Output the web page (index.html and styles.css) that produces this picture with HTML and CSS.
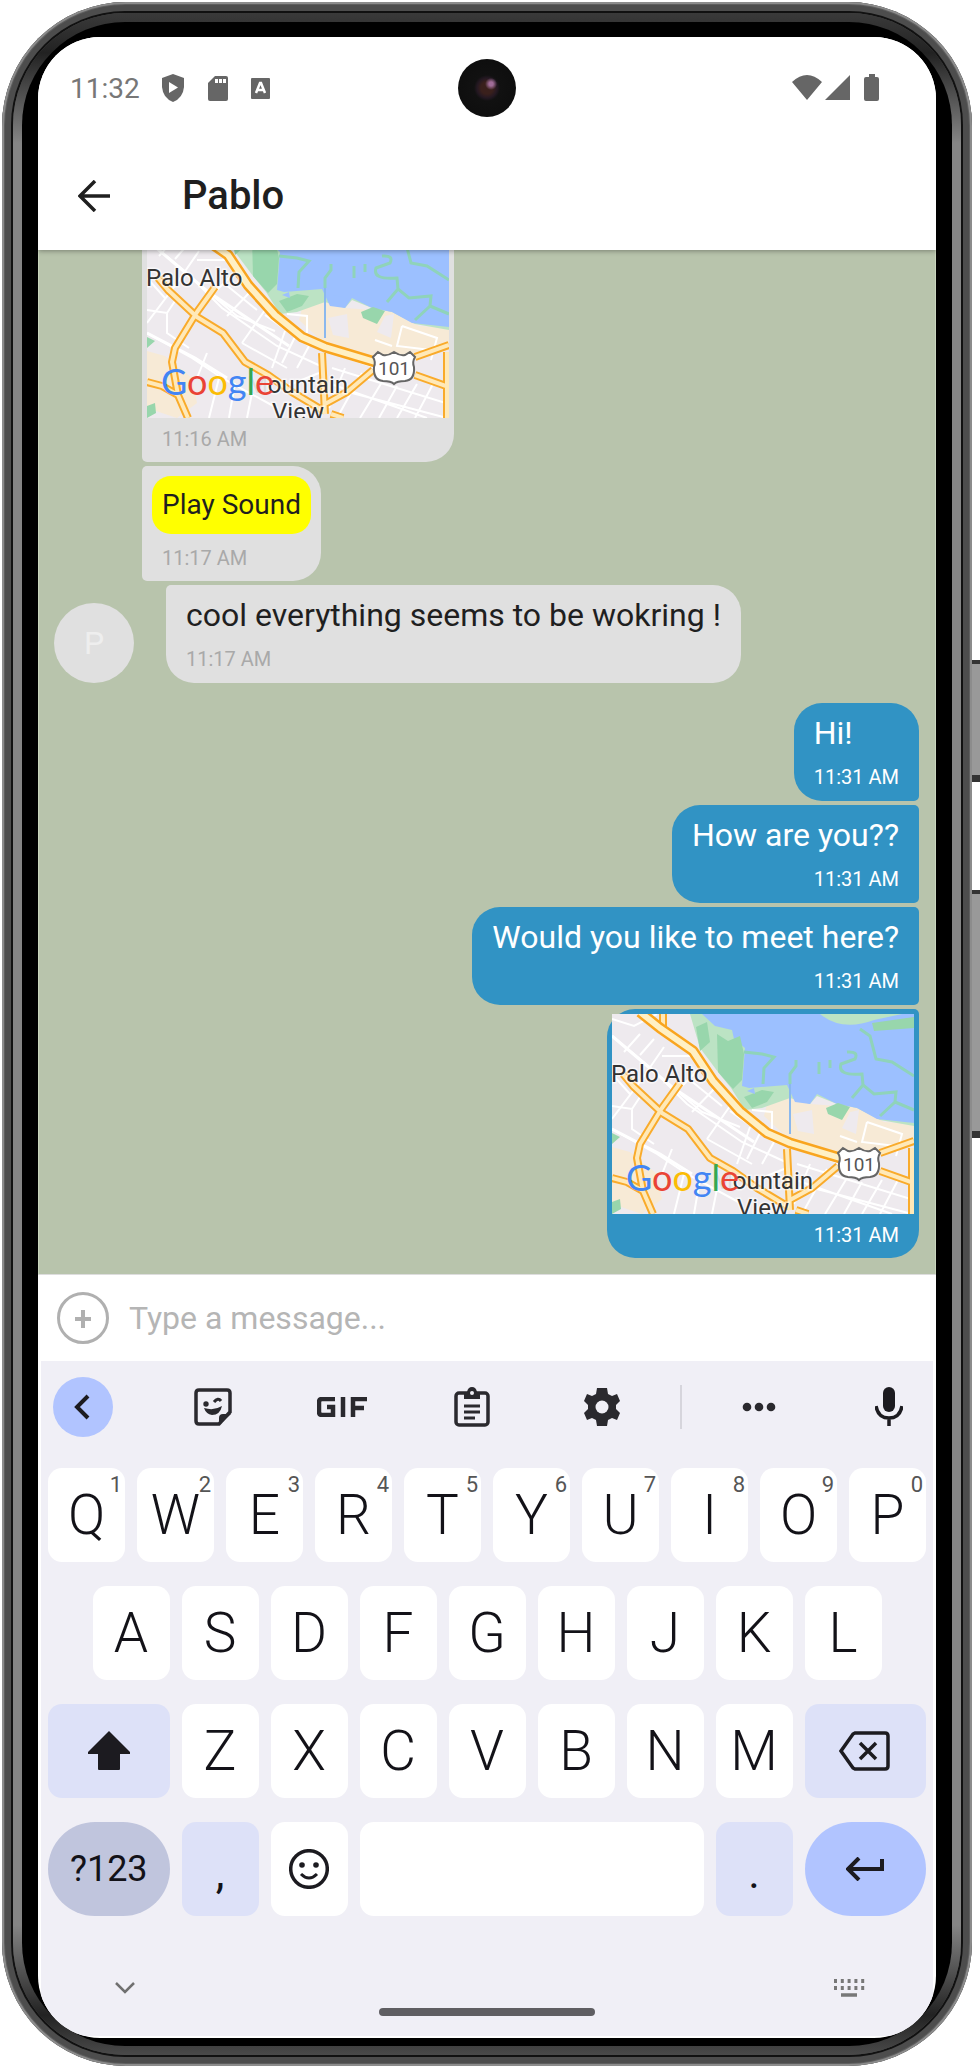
FILE: index.html
```html
<!DOCTYPE html>
<html lang="en">
<head>
<meta charset="utf-8">
<title>Pablo</title>
<link rel="stylesheet" href="styles.css">
</head>
<body>
<svg class="defs" aria-hidden="true">
  <symbol id="map" viewBox="0 0 302 200">
    <rect width="302" height="200" fill="#eeeaee"/>
    <path d="M0 133L18 138 45 160 50 185 30 200 0 190z M155 90L175 82 198 90 225 92 250 94 272 108 302 110V132L262 142 228 144 178 126 152 102z" fill="#f7ead6"/>
    <path d="M78 0H302V112L268 106 245 94 225 90 205 82 198 90 178 84 150 94 133 96 119 74 106 58 88 34z" fill="#bce3c4"/>
    <path d="M90 0L103 12 120 16 122 25 133 34 130 72 137 74 175 71 183 88 198 90 205 80 213 84 225 90 245 94 265 105 302 109V0z" fill="#9cc0ff"/>
    <path d="M208 0Q230 18 262 6L290 0z" fill="#bce3c4"/>
    <path d="M260 9L302 3V14L262 17z M84 13L95 8 98 28 88 37z M105 20L116 27 128 22 132 40 130 66 121 75 106 58z M132 83L150 76 162 78 155 88 140 94z M214 94L226 89 238 93 230 106 216 100z M0 119L8 123 0 130z M0 188L8 185 9 195 0 200z" fill="#98d6ac"/>
    <path d="M135 77L142 74 143 80z M181 76L200 80 196 89 182 86z" fill="#9cc0ff"/>
    <path d="M181 100L200 96 202 120 186 117z M238 98L247 96 244 120 230 114z" fill="#eeeaee"/>
    <path d="M132 38L150 40 162 43 152 54 151 70M184 46V52L178 60 178 70M235 38Q247 37 243 45L229 50Q225 62 250 60L251 71 262 80 284 78 283 88 268 102M251 71L240 84M248 15L258 22 264 45 280 48 302 62M283 88L302 96M207 48V60M218 46V54" fill="none" stroke="#8fd3ba" stroke-width="3"/>
    <path d="M178 70V120" stroke="#8ab8ee" stroke-width="2"/>
    <g fill="none" stroke="#fff" stroke-width="2">
      <path d="M0 22L40 55 75 90 130 128 178 150M0 115L45 140 75 160 130 190M12 38L28 20M28 41L42 25M0 5L22 12 45 0M52 33L30 65 0 105M85 57L52 90M104 73L80 98M118 92L95 125M138 113L125 150M0 92L20 95 30 80M20 95V115L42 130M60 73L90 98 128 113M78 66L110 92M118 97L162 128M0 60L18 80M150 115L135 145M162 128L150 150M95 125L140 150M60 135L50 160M72 160L62 200M88 165L82 200M105 175L100 200M135 170L172 155M50 42H85L100 70M185 150L302 186M184 166L280 200M198 150L182 190M215 155L190 200M235 164L213 200M250 168L232 200M270 166L250 200M286 166L268 200M200 140L260 160M205 175L300 200M228 122L245 128M255 108L290 120 284 142M255 108L250 128 284 132M140 96L160 98V115"/>
      <path d="M0 22L60 73 142 128M0 115L48 140 80 160" stroke-width="3"/>
    </g>
    <g fill="none" stroke-linejoin="round">
      <path d="M11 60L21 72 50 99 76 115 98 144 121 157 145 174 175 192M68 69L50 94 28 130 25 144 31 177 41 200M0 164L15 168 31 177M51 0V14M184 196L196 200M300 134V200M175 135L178 196M178 186L200 174 226 152M268 139L302 127M268 157L302 169" stroke="#f9ab2b" stroke-width="8"/>
      <path d="M11 60L21 72 50 99 76 115 98 144 121 157 145 174 175 192M68 69L50 94 28 130 25 144 31 177 41 200M0 164L15 168 31 177M51 0V14M184 196L196 200M300 134V200M175 135L178 196M178 186L200 174 226 152M268 139L302 127M268 157L302 169" stroke="#ffe9b8" stroke-width="4"/>
      <path d="M28 -2L48 14 81 37 101 67 128 97 155 119 178 129 228 144" stroke="#f9a51f" stroke-width="11"/>
      <path d="M28 -2L48 14 81 37 101 67 128 97 155 119 178 129 228 144" stroke="#fff0c4" stroke-width="6"/>
    </g>
    <path d="M231 134L236 137Q241 138 247 134Q253 138 258 137L263 134 268 139Q265 144 267 149Q268 162 258 163Q250 163 247 166Q244 163 236 163Q226 162 227 149Q229 144 226 139z" fill="#fff" stroke="#666" stroke-width="2"/>
    <text class="map-road" x="247" y="157" text-anchor="middle">101</text>
    <text class="map-place" x="-1" y="68">Palo Alto</text>
    <text class="map-place" x="201" y="175" text-anchor="end"><tspan opacity=".3" fill-opacity=".3">M</tspan>ountain</text>
    <text class="map-place" x="151" y="202" text-anchor="middle">View</text>
    <text class="map-logo" x="14" y="177"><tspan fill="#4285f4">G</tspan><tspan fill="#ea4335">o</tspan><tspan fill="#fbbc05">o</tspan><tspan fill="#4285f4">g</tspan><tspan fill="#34a853">l</tspan><tspan fill="#ea4335">e</tspan></text>
  </symbol>
</svg>

<div class="device">
  <div class="side-button power"></div>
  <div class="side-button volume"></div>
  <div class="rim"><div class="bevel"><div class="screen">
    <div class="status">
      <span class="clock">11:32</span>
      <svg class="status-icon" width="24" height="28" viewBox="0 0 24 28"><path d="M12 0L23 4V13Q22 24 12 28Q2 24 1 13V4z" fill="#666"/><path d="M8 8L17 13.500 8 19z" fill="#fff"/></svg>
      <svg class="status-icon" width="20" height="26" viewBox="0 0 20 26"><path d="M7 1H18Q20 1 20 3V24Q20 26 18 26H2Q0 26 0 24V8z" fill="#666"/><path d="M7 4h3v4H7zM11 4h3v4h-3zM15 4h3v4h-3z" fill="#fff"/></svg>
      <svg class="status-icon" width="19" height="21" viewBox="0 0 19 21"><rect width="19" height="21" rx="1" fill="#666"/><path d="M5 15L9 5H10L14 15M6 12H13" fill="none" stroke="#fff" stroke-width="2.500"/></svg>
      <span class="camera"></span>
      <svg class="signal" width="90" height="28" viewBox="0 0 90 28"><path d="M0 8Q15 -6 30 8L15 26zM33 26L58 1V26zM72 5Q72 3 74 3H77V0H83V3H85Q87 3 87 5V25Q87 27 85 27H74Q72 27 72 25z" fill="#666"/></svg>
    </div>
    <header class="app-bar">
      <button class="plain back" aria-label="Back"><svg width="32" height="32" viewBox="0 0 32 32"><path d="M32 16H2M17 1L2 16 17 31" fill="none" stroke="#1f1f1f" stroke-width="3.500"/></svg></button>
      <h1 class="title">Pablo</h1>
    </header>
    <main class="chat">
      <div class="group incoming indent">
        <article class="bubble with-map"><svg class="map" role="img" aria-label="Map of Mountain View"><use href="#map"/></svg><time>11:16 AM</time></article>
        <article class="bubble with-sound"><button class="sound">Play Sound</button><time>11:17 AM</time></article>
      </div>
      <div class="row">
        <span class="avatar">P</span>
        <div class="group incoming"><article class="bubble last"><p>cool everything seems to be wokring !</p><time>11:17 AM</time></article></div>
      </div>
      <div class="group outgoing">
        <article class="bubble first"><p>Hi!</p><time>11:31 AM</time></article>
        <article class="bubble"><p>How are you??</p><time>11:31 AM</time></article>
        <article class="bubble"><p>Would you like to meet here?</p><time>11:31 AM</time></article>
        <article class="bubble with-map last"><svg class="map" role="img" aria-label="Map of Mountain View"><use href="#map"/></svg><time>11:31 AM</time></article>
      </div>
    </main>
    <form class="composer">
      <button type="button" class="plain" aria-label="Add"><svg width="52" height="52" viewBox="0 0 52 52"><circle cx="26" cy="26" r="24.500" fill="none" stroke="#b0b0b0" stroke-width="3"/><path d="M26 18V36M18 27H34" stroke="#b0b0b0" stroke-width="4"/></svg></button>
      <input class="message" type="text" placeholder="Type a message..." aria-label="Message">
    </form>
    <section class="keyboard" aria-label="Keyboard">
      <div class="toolbar">
        <button class="plain tool collapse" aria-label="Collapse"><svg width="60" height="60" viewBox="0 0 60 60"><path d="M35 19L24 30 35 41" fill="none" stroke="#1c1b20" stroke-width="4"/></svg></button>
        <button class="plain tool" aria-label="Stickers"><svg width="38" height="38" viewBox="0 0 38 38"><path d="M5 2H33Q36 2 36 5V24L25 36H5Q2 36 2 33V5Q2 2 5 2z" fill="none" stroke="#2a292e" stroke-width="3.500"/><path d="M25 37V30Q25 26 29 26H37z" fill="#2a292e"/><circle cx="12" cy="16" r="2.700" fill="#2a292e"/><path d="M20 14Q24 9 27 13" fill="none" stroke="#2a292e" stroke-width="3"/><path d="M10 20Q20 23 28 18Q26 27 18 27Q12 26 10 20z" fill="#2a292e"/></svg></button>
        <button class="plain tool" aria-label="GIF"><svg width="50" height="20" viewBox="0 0 50 20"><path d="M18 2H5Q2 2 2 5V15Q2 18 5 18H16V10H10M26 0V20M36 20V2H50M36 11H47" fill="none" stroke="#2a292e" stroke-width="4.500"/></svg></button>
        <button class="plain tool" aria-label="Clipboard"><svg width="36" height="40" viewBox="0 0 36 40"><rect x="2" y="6" width="32" height="32" rx="3" fill="none" stroke="#2a292e" stroke-width="3.500"/><path d="M10 5H13Q14 0 18 0T23 5H26V12H10z" fill="#2a292e"/><circle cx="18" cy="6" r="2" fill="#f0eff6"/><path d="M10 19H26M10 25H26M10 31H21" stroke="#2a292e" stroke-width="3"/></svg></button>
        <button class="plain tool" aria-label="Settings"><svg width="36" height="38" viewBox="0 0 36 38"><path d="M13 0H23L24 6 28 8 33 6 36 13 32 17V21L36 25 33 32 28 30 24 32 23 38H13L12 32 8 30 3 32 0 25 4 21V17L0 13 3 6 8 8 12 6z" fill="#2a292e"/><circle cx="18" cy="19" r="6.500" fill="#f0eff6"/></svg></button>
        <span class="divider"></span>
        <button class="plain tool more" aria-label="More"><svg width="34" height="10" viewBox="0 0 34 10"><g fill="#2a292e"><circle cx="5" cy="5" r="4.300"/><circle cx="17" cy="5" r="4.300"/><circle cx="29" cy="5" r="4.300"/></g></svg></button>
        <button class="plain tool" aria-label="Voice"><svg width="28" height="40" viewBox="0 0 28 40"><rect x="8" y="0" width="12" height="25" rx="6" fill="#1c1b20"/><path d="M1 19Q3 31 14 31T27 19M14 31V39" fill="none" stroke="#1c1b20" stroke-width="3.500"/></svg></button>
      </div>
      <div class="keys">
        <button class="key">Q<sup>1</sup></button><button class="key">W<sup>2</sup></button><button class="key">E<sup>3</sup></button><button class="key">R<sup>4</sup></button><button class="key">T<sup>5</sup></button><button class="key">Y<sup>6</sup></button><button class="key">U<sup>7</sup></button><button class="key">I<sup>8</sup></button><button class="key">O<sup>9</sup></button><button class="key">P<sup>0</sup></button>
        <button class="key second">A</button><button class="key">S</button><button class="key">D</button><button class="key">F</button><button class="key">G</button><button class="key">H</button><button class="key">J</button><button class="key">K</button><button class="key">L</button>
        <button class="key third soft" aria-label="Shift"><svg width="42" height="40" viewBox="0 0 42 40"><path d="M21 0L42 21V23H32V38Q32 39 31 39H11Q10 39 10 38V23H0V21z" fill="#1c1b20"/></svg></button><button class="key">Z</button><button class="key">X</button><button class="key">C</button><button class="key">V</button><button class="key">B</button><button class="key">N</button><button class="key">M</button>
        <button class="key wide soft" aria-label="Delete"><svg width="52" height="40" viewBox="0 0 52 40"><path d="M16 2H46Q49 2 49 5V35Q49 38 46 38H16L14 37 2 20 14 3z" fill="none" stroke="#1c1b20" stroke-width="3.500"/><path d="M21 12L37 28M37 12L21 28" stroke="#1c1b20" stroke-width="3.500"/></svg></button>
        <button class="key wide symbols">?123</button><button class="key soft point">,</button>
        <button class="key" aria-label="Emoji"><svg width="40" height="40" viewBox="0 0 40 40"><circle cx="20" cy="20" r="18.300" fill="none" stroke="#1c1b20" stroke-width="3.500"/><circle cx="13" cy="16" r="2.800" fill="#1c1b20"/><circle cx="27" cy="16" r="2.800" fill="#1c1b20"/><path d="M12 25Q20 33 28 25" fill="none" stroke="#1c1b20" stroke-width="3"/></svg></button>
        <button class="key space" aria-label="Space"></button><button class="key soft point">.</button>
        <button class="key wide enter" aria-label="Enter"><svg width="38" height="24" viewBox="0 0 38 24"><path d="M36 2V12H3M13 1L2 12 13 23" fill="none" stroke="#1c1b20" stroke-width="4"/></svg></button>
      </div>
      <div class="nav">
        <button class="plain" aria-label="Hide keyboard"><svg width="20" height="12" viewBox="0 0 20 12"><path d="M1 1L10 10 19 1" fill="none" stroke="#707070" stroke-width="2.500"/></svg></button>
        <span class="home"></span>
        <button class="plain" aria-label="Switch keyboard"><svg width="32" height="18" viewBox="0 0 32 18"><path d="M1 2H32M1 9H32" fill="none" stroke="#777" stroke-width="4" stroke-dasharray="3 3.800"/><path d="M8 16H24" stroke="#777" stroke-width="3.500"/></svg></button>
      </div>
    </section>
  </div></div></div>
</div>
</body>
</html>
```
FILE: styles.css
```css
* { box-sizing: border-box; }
body { margin: 0; background: #fff; font-family: Roboto, "Liberation Sans", sans-serif; color: #1f1f1f; }
h1, p { margin: 0; font-weight: 400; }
button, input { font: inherit; color: inherit; border: 0; padding: 0; margin: 0; background: none; }
svg { display: block; }
.defs { position: absolute; width: 0; height: 0; }
.plain { flex: none; display: flex; align-items: center; justify-content: center; }

.device { position: relative; height: 100vh; padding: 2px 8px 2px 2px; }
.side-button {
  position: absolute; right: 0; width: 12px;
  background: #999; border-top: 4px solid #333; border-bottom: 7px solid #333;
}
.power { top: 660px; height: 122px; }
.volume { top: 890px; height: 248px; }
.rim {
  position: relative; height: 100%; padding: 11px; border-radius: 124px; background: #4d4d4d;
  box-shadow: inset 0 0 0 2px #8c8c8c, inset 0 0 0 3px #5e5e5e;
}
.bevel {
  height: 100%; padding: 15px 16px 8px; border-radius: 112px;
  border: 9px solid transparent;
  background:
    linear-gradient(#000, #000) padding-box,
    linear-gradient(#3a3a3a 0, #222 40px, #858585 130px, #858585 calc(100% - 130px), #222 calc(100% - 40px), #4a4a4a 100%) border-box;
  box-shadow: 0 0 0 2px #111;
}
.screen {
  position: relative; height: 100%; display: flex; flex-direction: column;
  overflow: hidden; border-radius: 62px; background: #fff;
}

.status { position: relative; z-index: 2; flex: none; height: 102px; padding: 0 54px 0 32px; display: flex; align-items: center; color: #777; background: #fff; }
.clock { font-size: 28px; margin-right: 21px; }
.status-icon { margin-right: 23px; }
.signal { margin-left: auto; }
.camera {
  position: absolute; left: 50%; top: 50%; width: 58px; height: 58px; border-radius: 50%; transform: translate(-50%, -50%);
  background: radial-gradient(circle at 57% 43%, #a06c98 0 2px, transparent 6px), radial-gradient(circle, #3a201c 0 6px, #241822 10px, #111 13px, #0c0c0c 100%);
}
.app-bar { position: relative; flex: none; height: 111px; padding: 2px 40px 0; display: flex; align-items: center; gap: 72px; background: #fff; box-shadow: 0 1px 5px rgba(0, 0, 0, .35); z-index: 1; }
.title { font-size: 40px; font-weight: 500; line-height: 48px; }

.chat {
  flex: 1; min-height: 0; overflow: hidden; padding: 0 16px 16px 15px;
  display: flex; flex-direction: column; justify-content: flex-end; background: #b8c4ac; border-right: 1px solid #c9d5bd; border-left: 1px solid #c9d5bd;
}
.chat > * { flex: none; }
.group { display: flex; flex-direction: column; gap: 4px; align-items: flex-start; }
.indent { padding-left: 88px; }
.row { display: flex; align-items: flex-end; gap: 32px; padding-top: 4px; padding-bottom: 20px; }
.avatar { width: 80px; height: 80px; border-radius: 50%; background: #e0e0e0; color: #eee; font-size: 32px; line-height: 80px; text-align: center; }
.bubble { display: flex; flex-direction: column; padding: 8px 20px 11px; font-size: 32px; line-height: 44px; }
.bubble time { font-size: 20px; line-height: 26px; padding-top: 9px; }
.incoming .bubble { background: #e0e0e0; border-radius: 5px 28px 28px 5px; align-items: flex-start; }
.incoming .bubble time { color: #a9a9a9; }
.incoming .bubble.last { border-radius: 5px 28px 28px 28px; color: #1f1f1f; }
.outgoing { align-items: flex-end; }
.outgoing .bubble { background: #3193c4; color: #fff; border-radius: 28px 5px 5px 28px; align-items: flex-end; }
.outgoing .bubble.first { border-radius: 28px 28px 5px 28px; align-items: flex-start; }
.outgoing .bubble.last { border-radius: 28px 5px 28px 28px; }
.bubble.with-map { padding: 5px 5px 10px; }
.map { width: 302px; height: 200px; }
.bubble.with-sound { padding: 10px; }
.bubble.with-sound time { padding: 11px 10px 0; }
.bubble.with-map time { padding: 8px 15px 0; }
.sound { height: 58px; padding: 0 10px; border-radius: 19px; background: #ff0; font-size: 28px; }
.map-place { font-size: 24px; fill: #333; stroke: #fff; stroke-width: 3px; paint-order: stroke; stroke-opacity: .6; }
.map-road { font-size: 19px; fill: #555; }
.map-logo { font-family: Lato, sans-serif; font-size: 36px; font-weight: 400; }
.map-logo tspan { stroke: none; }

.composer { flex: none; height: 87px; padding: 0 19px; display: flex; align-items: center; gap: 20px; border-top: 1px solid #ddd; }
.message { flex: 1; min-width: 0; font-size: 32px; outline: 0; }
.message::placeholder { color: #b5b5b5; opacity: 1; }

.keyboard { flex: none; margin: 0 3px 2px; padding: 0 7px; background: #f0eff6; }
.toolbar { height: 107px; padding: 16px 7px 31px 5px; display: flex; align-items: center; justify-content: space-between; }
.tool { width: 60px; height: 60px; }
.collapse { border-radius: 50%; background: #b1c4ff; }
.divider { width: 2px; height: 44px; margin: 0 -22px; background: #d6d5dc; }
.keys { display: grid; grid-template-columns: repeat(20, minmax(0, 1fr)); column-gap: 12px; row-gap: 24px; }
.key {
  position: relative; grid-column: span 2; height: 94px; border-radius: 14px; background: #fff; color: #131218;
  display: flex; align-items: center; justify-content: center; font-size: 55px; font-weight: 300; line-height: 64px;
}
.key sup { position: absolute; top: 4px; right: 3px; font-size: 22px; font-weight: 400; line-height: 26px; color: #555; }
.second { grid-column: 2 / span 2; }
.third { grid-column: 1 / span 3; }
.wide { grid-column: span 3; }
.soft { background: #dde1f8; }
.symbols { border-radius: 47px; background: #c0c5dd; font-size: 36px; font-weight: 400; }
.point { font-size: 44px; font-weight: 400; padding-top: 8px; }
.space { grid-column: span 8; }
.enter { border-radius: 47px; background: #b1c4ff; }
.nav { height: 120px; padding: 24px 61px 0; display: flex; align-items: center; justify-content: space-between; }
.nav .plain { width: 32px; }
.home { width: 216px; height: 8px; margin-top: 47px; border-radius: 4px; background: #5f5e62; }
```
